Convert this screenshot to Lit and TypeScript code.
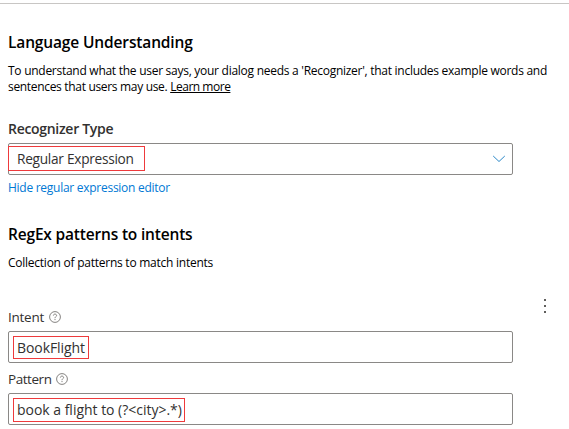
import { LitElement, html, css, svg } from "lit";
import { customElement, property } from "lit/decorators.js";

@customElement("help-icon")
class HelpIcon extends LitElement {
  static styles = css`
    :host { display: block; width: 12px; height: 12px; }
    svg { display: block; }
  `;
  render() {
    return html`<svg width="12" height="12" viewBox="0 0 12 12" fill="none" stroke="#777573">
      ${svg`<circle cx="6" cy="6" r="5.4" stroke-width="0.9" />
      <path d="M4.4 4.6C4.4 3.6 5.1 3.1 6 3.1S7.6 3.7 7.6 4.5C7.6 5.6 6 5.7 6 7.2" stroke-width="0.9" />
      <path d="M6 8.1V9.1" stroke-width="1" />`}
    </svg>`;
  }
}

@customElement("text-field")
class TextField extends LitElement {
  @property() label = "";
  @property() value = "";
  static styles = css`
    :host { display: block; }
    .label { display: flex; align-items: center; gap: 5px; height: 20px; margin-bottom: 4px; color: #323130; }
    .label-text { font-size: 13.5px; letter-spacing: var(--label-spacing, 0); }
    .box { box-sizing: border-box; height: 32px; border: 1px solid #8a8886; border-radius: 2px; display: flex; align-items: flex-start; padding: 4px 0 0 4px; }
    .mark { box-sizing: border-box; height: var(--mark-height, 23px); width: var(--mark-width); border: 1px solid #ee3a3c; padding-left: 3px; line-height: 21px; white-space: nowrap; letter-spacing: var(--value-spacing, 0); }
  `;
  render() {
    return html`
      <div class="label"><span class="label-text">${this.label}</span><help-icon></help-icon></div>
      <div class="box"><span class="mark">${this.value}</span></div>
    `;
  }
}

@customElement("app-root")
class AppRoot extends LitElement {
  static styles = css`
    :host { display: block; box-sizing: border-box; width: 569px; height: 429px; overflow: hidden; padding-top: 3px; background: #fff; color: #323130; font: 14px/20px "Open Sans", "Noto Sans", sans-serif; }
    .panel { border-top: 1px solid #c8c6c4; padding: 27px 0 0 8px; }
    h2 { margin: 0; font-size: 15.5px; line-height: 22px; font-weight: 550; color: #000; white-space: nowrap; }
    p { margin: 0; font-size: 12px; line-height: 16px; color: #000; white-space: nowrap; }
    .intro { margin-top: 10px; }
    .h1 { letter-spacing: -0.14px; }
    .h2 { letter-spacing: -0.18px; margin-top: 27px; }
    .line { display: block; }
    .l1 { letter-spacing: -0.27px; }
    .l2 { letter-spacing: -0.32px; }
    .learn { color: #000; text-decoration: underline; text-underline-offset: 1px; letter-spacing: -0.48px; }
    .type-label { margin-top: 24px; font-weight: 550; letter-spacing: -0.3px; }
    .select { box-sizing: border-box; width: 505px; height: 32px; margin-top: 4px; border: 1px solid #8a8886; border-radius: 2px; display: flex; align-items: center; justify-content: space-between; padding-right: 6px; }
    .choice { box-sizing: border-box; align-self: flex-start; width: 137px; height: 25px; margin: 2px 0 0 -1px; border: 1px solid #ee3a3c; padding-left: 8px; font-size: 13.7px; line-height: 23px; letter-spacing: -0.28px; white-space: nowrap; }
    .toggle { display: block; margin-top: 5px; font-size: 12px; line-height: 16px; color: #0078d4; text-decoration: none; letter-spacing: -0.27px; }
    .note { margin-top: 10px; letter-spacing: -0.25px; }
    .pattern { display: flex; margin-top: 36px; }
    .fields { width: 505px; display: grid; gap: 6px; }
    .intent { --mark-width: 76px; --value-spacing: -0.07px; --label-spacing: -0.25px; }
    .regex { --mark-width: 172px; --mark-height: 24px; --value-spacing: -0.02px; --label-spacing: -0.45px; }
    .more { display: grid; gap: 4px; align-content: start; margin: -8px 0 0 31px; }
    .dot { width: 2px; height: 2px; background: #605e5c; }
  `;
  render() {
    return html`<div class="panel">
      <h2 class="h1">Language Understanding</h2>
      <p class="intro">
        <span class="line l1">To understand what the user says, your dialog needs a 'Recognizer', that includes example words and</span>
        <span class="line l2">sentences that users may use. <a class="learn">Learn more</a></span>
      </p>
      <div class="type-label">Recognizer Type</div>
      <div class="select">
        <span class="choice">Regular Expression</span>
        <svg width="14" height="8" viewBox="0 0 14 8" fill="none" stroke="#2b88c8"><path d="M1.2 1L7 6.5L12.8 1" /></svg>
      </div>
      <a class="toggle">Hide regular expression editor</a>
      <h2 class="h2">RegEx patterns to intents</h2>
      <p class="note">Collection of patterns to match intents</p>
      <div class="pattern">
        <div class="fields">
          <text-field class="intent" label="Intent" value="BookFlight"></text-field>
          <text-field class="regex" label="Pattern" value="book a flight to (?&lt;city&gt;.*)"></text-field>
        </div>
        <div class="more"><i class="dot"></i><i class="dot"></i><i class="dot"></i></div>
      </div>
    </div>`;
  }
}
